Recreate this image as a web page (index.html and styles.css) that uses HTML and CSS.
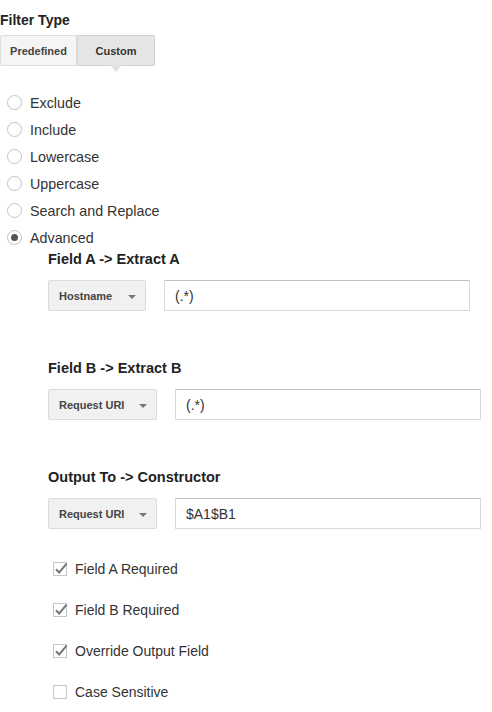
FILE: index.html
```html
<!DOCTYPE html>
<html>
<head>
<meta charset="utf-8">
<link rel="stylesheet" href="styles.css">
</head>
<body>
<div class="page">
  <div class="title">Filter Type</div>
  <div class="tabs">
    <div class="tab">Predefined</div>
    <div class="tab active">Custom<span class="tab-arrow"></span></div>
  </div>

  <div class="radios">
    <label class="radio-row"><span class="radio"></span>Exclude</label>
    <label class="radio-row"><span class="radio"></span>Include</label>
    <label class="radio-row"><span class="radio"></span>Lowercase</label>
    <label class="radio-row"><span class="radio"></span>Uppercase</label>
    <label class="radio-row"><span class="radio"></span>Search and Replace</label>
    <label class="radio-row"><span class="radio checked"></span>Advanced</label>
  </div>

  <div class="advanced">
    <div class="group">
      <div class="heading">Field A -&gt; Extract A</div>
      <div class="field-row">
        <div class="select sel-a">Hostname<span class="caret"></span></div>
        <div class="input">(.*)</div>
      </div>
    </div>
    <div class="group">
      <div class="heading">Field B -&gt; Extract B</div>
      <div class="field-row">
        <div class="select sel-b">Request URI<span class="caret"></span></div>
        <div class="input">(.*)</div>
      </div>
    </div>
    <div class="group">
      <div class="heading">Output To -&gt; Constructor</div>
      <div class="field-row">
        <div class="select sel-b">Request URI<span class="caret"></span></div>
        <div class="input">$A1$B1</div>
      </div>
    </div>

    <div class="checks">
      <label class="check-row"><span class="checkbox"><svg viewBox="0 0 16 16" width="16" height="16"><path d="M3 8.2 L6.2 11.4 L13.6 2.6" fill="none" stroke="#777" stroke-width="2"/></svg></span>Field A Required</label>
      <label class="check-row"><span class="checkbox"><svg viewBox="0 0 16 16" width="16" height="16"><path d="M3 8.2 L6.2 11.4 L13.6 2.6" fill="none" stroke="#777" stroke-width="2"/></svg></span>Field B Required</label>
      <label class="check-row"><span class="checkbox"><svg viewBox="0 0 16 16" width="16" height="16"><path d="M3 8.2 L6.2 11.4 L13.6 2.6" fill="none" stroke="#777" stroke-width="2"/></svg></span>Override Output Field</label>
      <label class="check-row"><span class="checkbox"></span>Case Sensitive</label>
    </div>
  </div>
</div>
</body>
</html>
```

FILE: styles.css
```css
* { box-sizing: border-box; }
html, body { margin: 0; padding: 0; background: #fff; }
body {
  font-family: "Liberation Sans", Arial, sans-serif;
  font-size: 13px;
  color: #333;
}
.page { width: 492px; height: 712px; overflow: hidden; }

.title {
  font-weight: bold;
  font-size: 14px;
  line-height: 16px;
  color: #222;
  padding-top: 12px;
}

.tabs {
  display: flex;
  margin-top: 7px;
  height: 31px;
}
.tab {
  position: relative;
  display: flex;
  align-items: center;
  justify-content: center;
  font-size: 11px;
  font-weight: bold;
  color: #444;
  background: #f5f5f5;
  border: 1px solid #dcdcdc;
  width: 77px;
  border-radius: 2px 0 0 2px;
}
.tab.active {
  background: #e6e6e6;
  border-color: #cfcfcf;
  border-left: 1px solid #d6d6d6;
  border-radius: 0 2px 2px 0;
  width: 78px;
  color: #333;
}
.tab-arrow {
  position: absolute;
  left: 50%;
  top: 100%;
  margin-left: -6px;
  width: 0;
  height: 0;
  border-left: 6px solid transparent;
  border-right: 6px solid transparent;
  border-top: 7px solid #e2e2e2;
}

.radios {
  margin-top: 23px;
  display: flex;
  flex-direction: column;
}
.radio-row {
  display: flex;
  align-items: center;
  height: 27px;
  font-size: 14.3px;
  color: #333;
  padding-left: 7px;
}
.radio {
  width: 15px;
  height: 15px;
  border-radius: 50%;
  border: 1px solid #c2c2c2;
  background: #fff;
  margin-right: 8px;
  display: flex;
  align-items: center;
  justify-content: center;
}
.radio.checked::after {
  content: "";
  width: 7px;
  height: 7px;
  border-radius: 50%;
  background: #555;
}

.advanced { padding-left: 48px; }
.group + .group { margin-top: 49px; }
.heading {
  font-weight: bold;
  font-size: 14.5px;
  line-height: 16px;
  color: #222;
}
.field-row {
  display: flex;
  align-items: center;
  margin-top: 13px;
  gap: 18px;
}
.select {
  position: relative;
  display: flex;
  align-items: center;
  height: 31px;
  padding-left: 10px;
  font-size: 11px;
  font-weight: bold;
  color: #444;
  background: #f1f1f1;
  border: 1px solid #dcdcdc;
  border-radius: 2px;
}
.sel-a { width: 98px; }
.sel-b { width: 109px; }
.caret {
  position: absolute;
  right: 9px;
  top: 14px;
  width: 0;
  height: 0;
  border-left: 4px solid transparent;
  border-right: 4px solid transparent;
  border-top: 4px solid #777;
}
.input {
  width: 306px;
  height: 31px;
  border: 1px solid #d9d9d9;
  border-top-color: #c0c0c0;
  padding-left: 10px;
  display: flex;
  align-items: center;
  font-size: 14px;
  color: #333;
}

.checks {
  margin-top: 19px;
  padding-left: 5px;
  display: flex;
  flex-direction: column;
}
.check-row {
  display: flex;
  align-items: center;
  height: 41px;
  font-size: 14px;
  color: #333;
}
.checkbox {
  position: relative;
  width: 14px;
  height: 14px;
  border: 1px solid #c6c6c6;
  background: #fff;
  margin-right: 8px;
}
.checkbox svg {
  position: absolute;
  left: -1px;
  top: -2px;
}
```
